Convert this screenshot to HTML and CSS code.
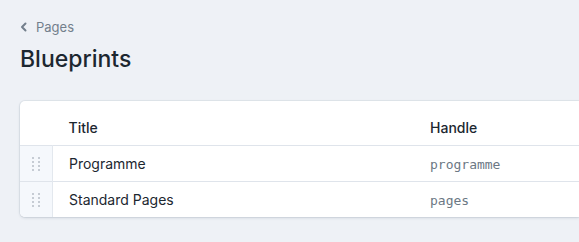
FILE: index.html
```html
<!DOCTYPE html>
<html>
<head>
<meta charset="utf-8">
<link rel="stylesheet" href="styles.css">
</head>
<body>
<div class="page">
  <a class="crumb" href="#">
    <svg class="chev" width="8" height="10" viewBox="0 0 8 10"><path d="M5.5 1.5 L2 5 L5.5 8.5" fill="none" stroke="#737f8c" stroke-width="2" stroke-linecap="round" stroke-linejoin="round"/></svg>
    <span>Pages</span>
  </a>
  <h1 class="title">Blueprints</h1>
  <div class="card">
    <table class="table">
      <thead>
        <tr><th class="handle-col"></th><th class="col-title">Title</th><th class="col-handle">Handle</th></tr>
      </thead>
      <tbody>
        <tr>
          <td class="drag"><span class="dots"><i></i><i></i><i></i><i></i><i></i><i></i><i></i><i></i></span></td>
          <td class="col-title">Programme</td>
          <td class="col-handle"><code>programme</code></td>
        </tr>
        <tr>
          <td class="drag"><span class="dots"><i></i><i></i><i></i><i></i><i></i><i></i><i></i><i></i></span></td>
          <td class="col-title">Standard Pages</td>
          <td class="col-handle"><code>pages</code></td>
        </tr>
      </tbody>
    </table>
  </div>
</div>
</body>
</html>
```
FILE: styles.css
```css
html, body { margin: 0; padding: 0; }
body {
  background: #eef1f6;
  font-family: Inter, "Noto Sans", sans-serif;
  color: #1c2730;
  width: 579px;
  height: 242px;
  overflow: hidden;
}
.page { padding: 18px 0 0 20px; }
.crumb {
  display: flex;
  align-items: center;
  gap: 8px;
  color: #737f8c;
  text-decoration: none;
  font-size: 13px;
  height: 18px;
}
.title {
  margin: 9px 0 0 0;
  font-size: 23px;
  font-weight: 500;
  line-height: 28px;
  color: #1c2730;
}
.card {
  margin-top: 28px;
  background: #fff;
  border-radius: 5px 0 0 5px;
  box-shadow: 0 0 0 1px rgba(40,60,90,0.06), 0 1px 3px rgba(40,60,90,0.15);
  overflow: hidden;
}
.table { border-collapse: collapse; width: 100%; font-size: 14px; }
th { text-align: left; font-weight: 500; height: 36px; padding: 8px 0 0 0; vertical-align: middle; }
td { height: 35px; padding: 0; border-top: 1px solid #dfe4eb; vertical-align: middle; }
.handle-col { width: 32px; }
.drag { width: 32px; background: #f5f8fc; border-right: 1px solid #e3e8ee; }
.col-title { padding-left: 16px; width: 344px; }
.col-handle { padding-left: 17px; }
code { font-family: "DejaVu Sans Mono", monospace; font-size: 13px; color: #6c7884; }
.dots { display: grid; grid-template-columns: 2px 2px; gap: 2px 4px; margin-left: 12px; width: 8px; }
.dots i { width: 2px; height: 2px; background: #c6ccd4; display: block; }
```
